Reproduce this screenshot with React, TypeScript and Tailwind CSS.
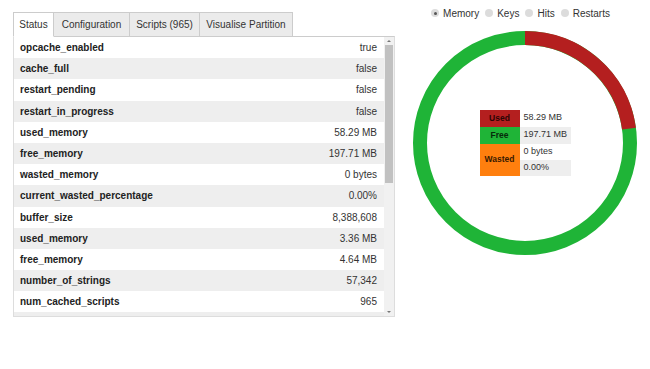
import React, { useState } from "react";

const rows: [string, string][] = [
    ["opcache_enabled", "true"],
    ["cache_full", "false"],
    ["restart_pending", "false"],
    ["restart_in_progress", "false"],
    ["used_memory", "58.29 MB"],
    ["free_memory", "197.71 MB"],
    ["wasted_memory", "0 bytes"],
    ["current_wasted_percentage", "0.00%"],
    ["buffer_size", "8,388,608"],
    ["used_memory", "3.36 MB"],
    ["free_memory", "4.64 MB"],
    ["number_of_strings", "57,342"],
    ["num_cached_scripts", "965"],
];

const tabs = [
    { label: "Status", w: "w-[41px]" },
    { label: "Configuration", w: "w-[77px]" },
    { label: "Scripts (965)", w: "w-[71px]" },
    { label: "Visualise Partition", w: "w-[94px]" },
];

const modes = ["Memory", "Keys", "Hits", "Restarts"];

const Donut = () => {
    const r = 105;
    const c = 2 * Math.PI * r;
    const used = 58.29 / 256;
    return (
        <svg width="224" height="224" viewBox="0 0 224 224">
            <circle cx="112" cy="112" r={r} fill="none" stroke="#1FB437" strokeWidth="14" />
            <circle
                cx="112"
                cy="112"
                r={r}
                fill="none"
                stroke="#B41F1F"
                strokeWidth="14"
                strokeDasharray={`${used * c} ${c}`}
                transform="rotate(-90 112 112)"
            />
        </svg>
    );
};

const App = () => {
    const [active, setActive] = useState(0);
    const [mode, setMode] = useState(0);

    return (
        <div className="w-[650px] h-[369px] bg-white flex pt-[7px] pl-[13px] font-['Liberation_Sans',Arial,sans-serif] text-[#333]">
            <div className="w-[382px] mt-[5px] flex flex-col">
                <div className="flex h-[24px]">
                    {tabs.map((t, i) => (
                        <button
                            key={t.label}
                            onClick={() => setActive(i)}
                            className={`${t.w} h-[25px] text-[10px] border border-[#ccc] -ml-px first:ml-0 flex items-center justify-center ${i === active ? "bg-white border-b-white relative z-10" : "bg-[#ebebeb]"}`}
                        >
                            {t.label}
                        </button>
                    ))}
                </div>
                <div className="h-[281px] border border-[#ddd] border-t-[#ccc] flex">
                    <div className="flex-1 overflow-hidden">
                        {rows.map(([k, v], i) => (
                            <div
                                key={i}
                                className={`h-[21.2px] flex items-center justify-between pl-[6px] pr-[7px] text-[10px] ${i % 2 ? "bg-[#eeeeee]" : "bg-white"}`}
                            >
                                <span className="font-bold text-[#222]">{k}</span>
                                <span>{v}</span>
                            </div>
                        ))}
                        <div className="h-[5px] bg-[#eeeeee]" />
                    </div>
                    {/* scrollbar */}
                    <div className="w-[10px] bg-[#f1f1f1] flex flex-col items-center">
                        <div className="h-[8px] flex items-center justify-center">
                            <span className="w-0 h-0 border-x-[2px] border-x-transparent border-b-[2px] border-b-[#777]" />
                        </div>
                        <div className="w-[8px] h-[138px] bg-[#c1c1c1]" />
                        <div className="flex-1" />
                        <div className="h-[8px] flex items-center justify-center">
                            <span className="w-0 h-0 border-x-[2px] border-x-transparent border-t-[2px] border-t-[#777]" />
                        </div>
                    </div>
                </div>
            </div>
            <div className="flex-1 flex flex-col items-center">
                <div className="flex items-center h-[12px] gap-[6px] text-[10px] text-[#333] ml-[-4px]">
                    {modes.map((m, i) => (
                        <label key={m} className="flex items-center gap-[4px] cursor-pointer" onClick={() => setMode(i)}>
                            <span className="w-[8px] h-[8px] rounded-full bg-[#dcdcdc] flex items-center justify-center">
                                {mode === i && <span className="w-[3px] h-[3px] rounded-full bg-[#555]" />}
                            </span>
                            {m}
                        </label>
                    ))}
                </div>
                <div className="relative mt-[12px] ml-[5px]">
                    <Donut />
                    <div className="absolute inset-0 flex items-center justify-center">
                        <table className="border-collapse text-[9px] -mt-px">
                            <tbody>
                                <tr className="h-[17px]">
                                    <td className="w-[40px] bg-[#B41F1F] text-center font-bold text-[8.5px] text-[#2a0505]">Used</td>
                                    <td className="w-[51px] pl-[4px] bg-white">58.29 MB</td>
                                </tr>
                                <tr className="h-[17px]">
                                    <td className="bg-[#1FB437] text-center font-bold text-[8.5px] text-[#062b0b]">Free</td>
                                    <td className="pl-[4px] bg-[#eeeeee]">197.71 MB</td>
                                </tr>
                                <tr className="h-[16px]">
                                    <td rowSpan={2} className="bg-[#ff7f0e] text-center font-bold text-[8.5px] text-[#3a1a00]">Wasted</td>
                                    <td className="pl-[4px] bg-white">0 bytes</td>
                                </tr>
                                <tr className="h-[16px]">
                                    <td className="pl-[4px] bg-[#eeeeee]">0.00%</td>
                                </tr>
                            </tbody>
                        </table>
                    </div>
                </div>
            </div>
        </div>
    );
};

export default App;
